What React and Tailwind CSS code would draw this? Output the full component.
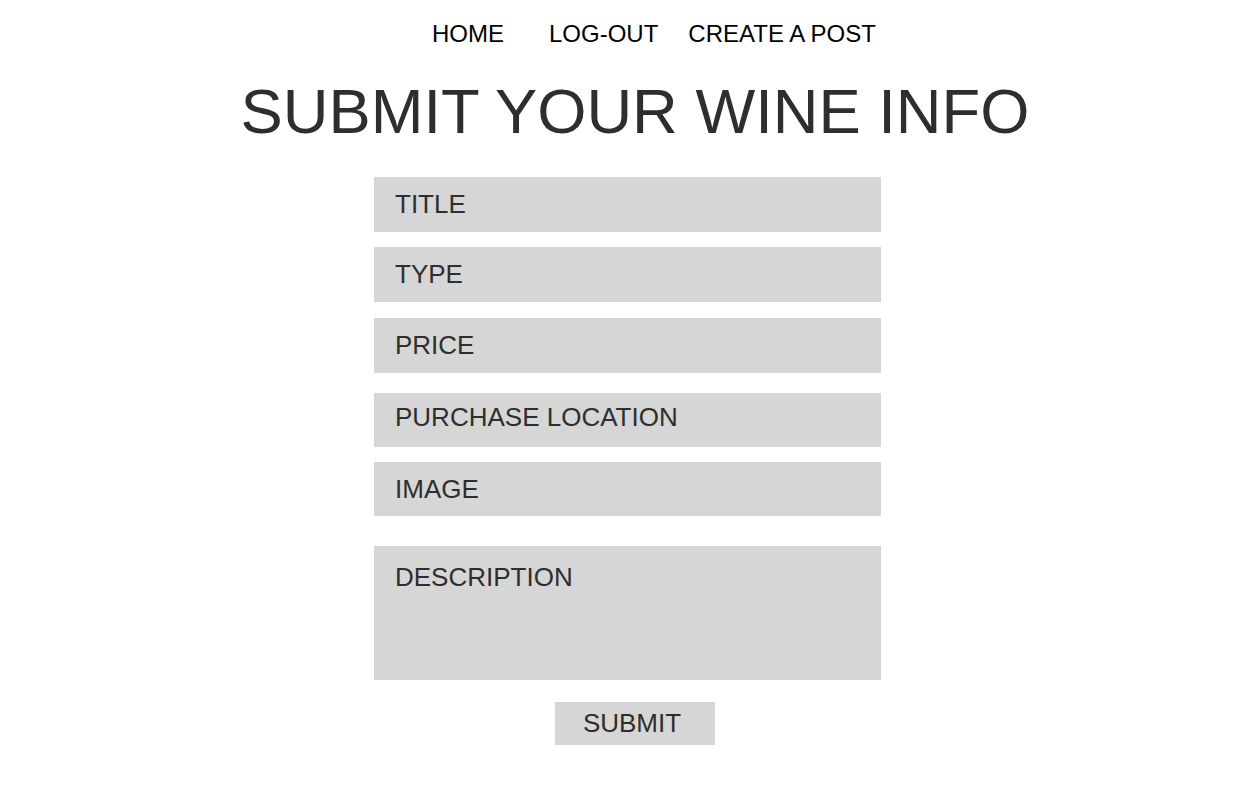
const fields = [
  { label: "TITLE", cls: "mt-0 h-[55px]" },
  { label: "TYPE", cls: "mt-[15px] h-[55px]" },
  { label: "PRICE", cls: "mt-[16px] h-[55px]" },
  { label: "PURCHASE LOCATION", cls: "mt-[20px] h-[54px] pb-[6px]" },
  { label: "IMAGE", cls: "mt-[15px] h-[54px]" },
];

export default function App() {
  return (
    <div className="min-h-[785px] w-full bg-white font-['Liberation_Sans',Arial,sans-serif]">
      <nav className="flex pt-[20px] pl-[432px] text-[24px] leading-[28px] text-black">
        <a href="#">HOME</a>
        <a href="#" className="ml-[45px]">LOG-OUT</a>
        <a href="#" className="ml-[30px]">CREATE A POST</a>
      </nav>
      <h1 className="mt-[27px] pl-[15px] text-center text-[63.3px] leading-[72px] text-[#2e2e2e]">
        SUBMIT YOUR WINE INFO
      </h1>
      <form className="mx-auto mt-[30px] flex w-[507px] flex-col" onSubmit={(e) => e.preventDefault()}>
        {fields.map((f) => (
          <input
            key={f.label}
            placeholder={f.label}
            className={`${f.cls} w-full bg-[#d6d6d6] px-[21px] text-[26px] text-[#2e2e2e] outline-none placeholder:text-[#2e2e2e]`}
          />
        ))}
        <textarea
          placeholder="DESCRIPTION"
          className="mt-[30px] h-[134px] w-full resize-none bg-[#d6d6d6] px-[21px] pt-[16px] text-[26px] leading-[30px] text-[#2e2e2e] outline-none placeholder:text-[#2e2e2e]"
        />
        <button
          type="submit"
          className="mx-auto mt-[22px] h-[43px] w-[160px] translate-x-[7px] bg-[#d6d6d6] pr-[5px] text-[26px] leading-[43px] text-[#2e2e2e]"
        >
          SUBMIT
        </button>
      </form>
    </div>
  );
}
